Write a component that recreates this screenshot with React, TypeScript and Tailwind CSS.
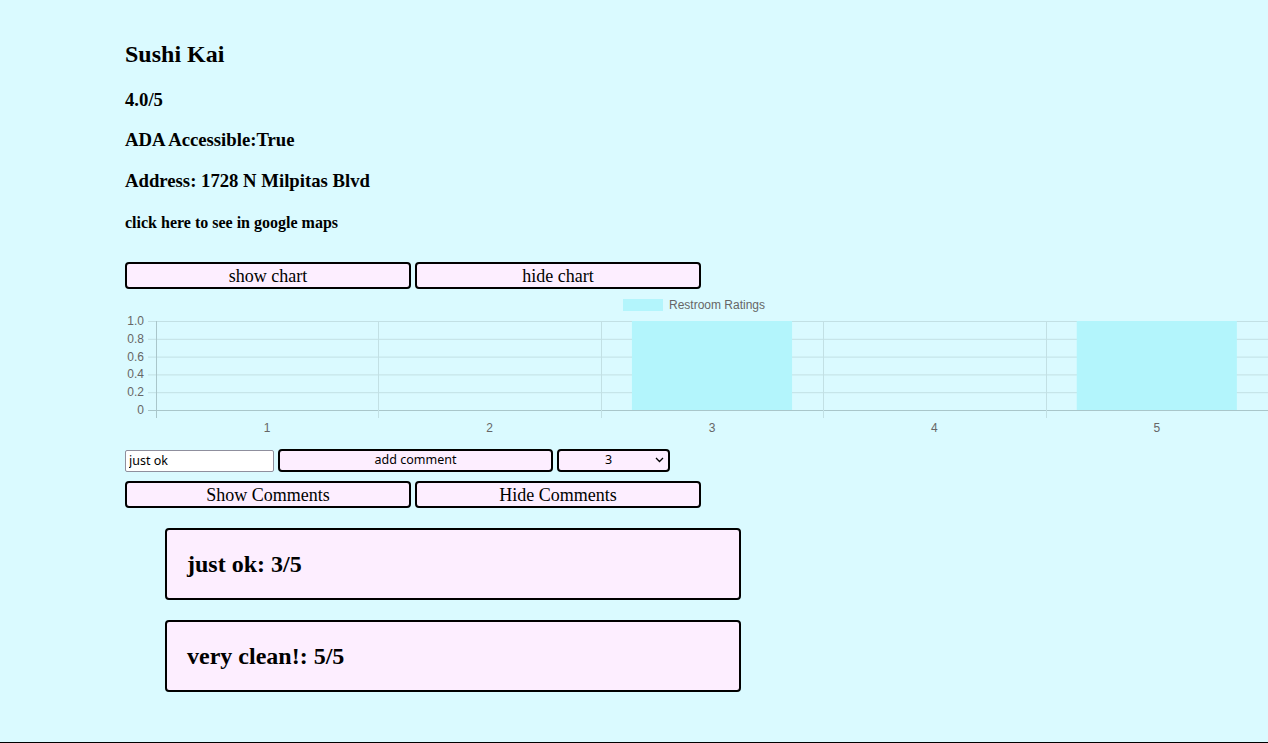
import React from 'react';

const ratings = [0, 0, 1, 0, 1];

const RatingsChart: React.FC = () => {
  const left = 31;
  const right = 1143;
  const top = 28;
  const bottom = 117;
  const step = (right - left) / ratings.length;
  const yTicks = ['1.0', '0.8', '0.6', '0.4', '0.2', '0'];

  return (
    <svg width="1143" height="147" viewBox="0 0 1143 147" className="block mt-[4px] font-['Liberation_Sans',Arial,sans-serif]">
      {/* legend */}
      <rect x="498" y="6" width="40" height="12" fill="#b3f5fc" />
      <text x="544" y="15.5" fontSize="12" fill="#666">Restroom Ratings</text>

      {/* horizontal grid */}
      {yTicks.map((label, i) => {
        const y = top + ((bottom - top) / 5) * i;
        return (
          <g key={label}>
            <line x1={left - 8} x2={right} y1={y + 0.5} y2={y + 0.5} stroke={i === 5 ? '#a9c6ca' : '#c2e0e4'} />
            <text x="19" y={y + 4} fontSize="12" fill="#666" textAnchor="end">{label}</text>
          </g>
        );
      })}

      {/* vertical grid */}
      {Array.from({ length: ratings.length + 1 }).map((_, i) => {
        const x = Math.round(left + step * i) + 0.5;
        return <line key={i} x1={x} x2={x} y1={top} y2={bottom + 8} stroke={i === 0 ? '#a9c6ca' : '#c2e0e4'} />;
      })}

      {/* bars */}
      {ratings.map((r, i) => {
        if (!r) return null;
        const w = step * 0.72;
        const x = left + step * i + (step - w) / 2;
        return <rect key={i} x={x} y={top} width={w} height={bottom - top} fill="#b3f5fc" />;
      })}

      {/* x labels */}
      {ratings.map((_, i) => (
        <text key={i} x={left + step * i + step / 2} y="139" fontSize="12" fill="#666" textAnchor="middle">{i + 1}</text>
      ))}
    </svg>
  );
};

const comments = [
  { text: 'just ok', rating: 3 },
  { text: 'very clean!', rating: 5 },
];

const App: React.FC = () => {
  return (
    <div className="min-h-[743px] bg-[#dafaff] border-b-[1.5px] border-black pl-[125px] pt-[40px] text-black font-['Liberation_Serif','Times_New_Roman',serif] overflow-hidden">
      <h2 className="text-[24px] leading-[28px] font-bold">Sushi Kai</h2>
      <h3 className="mt-[21px] text-[18.72px] leading-[22px] font-bold">4.0/5</h3>
      <h3 className="mt-[18px] text-[18.72px] leading-[22px] font-bold">ADA Accessible:True</h3>
      <h3 className="mt-[19px] text-[18.72px] leading-[22px] font-bold">Address: 1728 N Milpitas Blvd</h3>
      <h4 className="mt-[22px] text-[16px] leading-[18px] font-bold">click here to see in google maps</h4>

      <div className="mt-[30px] flex gap-[4px]">
        <button className="w-[286px] h-[27px] border-2 border-black rounded-[4px] bg-[#fdeeff] text-[18px] leading-none">show chart</button>
        <button className="w-[286px] h-[27px] border-2 border-black rounded-[4px] bg-[#fdeeff] text-[18px] leading-none">hide chart</button>
      </div>

      <RatingsChart />

      <div className="mt-[9px] flex items-center gap-[4px] font-['Noto_Sans',sans-serif] text-[12.5px]">
        <input
          defaultValue="just ok"
          className="w-[149px] h-[22px] bg-white border border-[#8f8f9d] rounded-[2px] px-[3px] outline-none"
        />
        <button className="w-[275px] h-[23px] border-2 border-black rounded-[4px] bg-[#fdeeff] leading-none">add comment</button>
        <div className="relative w-[113px] h-[23px]">
          <select
            defaultValue="3"
            className="w-full h-full appearance-none border-2 border-black rounded-[4px] bg-[#fdeeff] text-center [text-align-last:center] pr-[10px] leading-none"
          >
            <option value="1">1</option>
            <option value="2">2</option>
            <option value="3">3</option>
            <option value="4">4</option>
            <option value="5">5</option>
          </select>
          <svg className="absolute right-[6px] top-[8px] pointer-events-none" width="9" height="6" viewBox="0 0 9 6">
            <path d="M1 1l3.5 3.5L8 1" fill="none" stroke="#000" strokeWidth="1.3" />
          </svg>
        </div>
      </div>

      <div className="mt-[9px] flex gap-[4px]">
        <button className="w-[286px] h-[27px] border-2 border-black rounded-[4px] bg-[#fdeeff] text-[18px] leading-none">Show Comments</button>
        <button className="w-[286px] h-[27px] border-2 border-black rounded-[4px] bg-[#fdeeff] text-[18px] leading-none">Hide Comments</button>
      </div>

      <ul className="pl-[40px]">
        {comments.map((c) => (
          <li key={c.text} className="mt-[20px] w-[576px] h-[72px] border-2 border-black rounded-[4px] bg-[#fdeeff] flex items-center pl-[20px]">
            <h2 className="text-[24px] leading-[28px] font-bold">{c.text}: {c.rating}/5</h2>
          </li>
        ))}
      </ul>
    </div>
  );
};

export default App;
